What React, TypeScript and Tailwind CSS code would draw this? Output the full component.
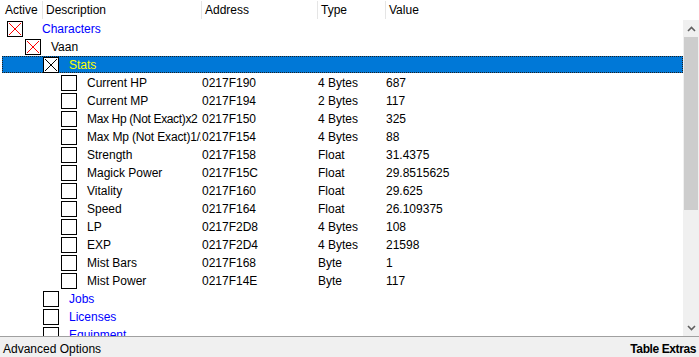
import React from 'react';

type Row = {
  level: number;
  label: string;
  address?: string;
  type?: string;
  value?: string;
  header?: boolean;
  mark?: 'red' | 'black' | 'none';
  selected?: boolean;
  tight?: string;
};

const ROWS: Row[] = [
  { level: 0, label: 'Characters', header: true, mark: 'red' },
  { level: 1, label: 'Vaan', mark: 'red' },
  { level: 2, label: 'Stats', mark: 'black', selected: true },
  { level: 3, label: 'Current HP', address: '0217F190', type: '4 Bytes', value: '687' },
  { level: 3, label: 'Current MP', address: '0217F194', type: '2 Bytes', value: '117' },
  { level: 3, label: 'Max Hp (Not Exact)x2', address: '0217F150', type: '4 Bytes', value: '325', tight: 'tracking-[-0.35px]' },
  { level: 3, label: 'Max Mp (Not Exact)1/2', address: '0217F154', type: '4 Bytes', value: '88', tight: 'tracking-[-0.15px]' },
  { level: 3, label: 'Strength', address: '0217F158', type: 'Float', value: '31.4375' },
  { level: 3, label: 'Magick Power', address: '0217F15C', type: 'Float', value: '29.8515625' },
  { level: 3, label: 'Vitality', address: '0217F160', type: 'Float', value: '29.625' },
  { level: 3, label: 'Speed', address: '0217F164', type: 'Float', value: '26.109375' },
  { level: 3, label: 'LP', address: '0217F2D8', type: '4 Bytes', value: '108' },
  { level: 3, label: 'EXP', address: '0217F2D4', type: '4 Bytes', value: '21598' },
  { level: 3, label: 'Mist Bars', address: '0217F168', type: 'Byte', value: '1' },
  { level: 3, label: 'Mist Power', address: '0217F14E', type: 'Byte', value: '117' },
  { level: 2, label: 'Jobs', header: true },
  { level: 2, label: 'Licenses', header: true },
  { level: 2, label: 'Equipment', header: true },
];

function CheckBox({ mark = 'none' }: { mark?: Row['mark'] }) {
  return (
    <div className="w-[16px] h-[16px] border border-black bg-white shrink-0 relative">
      {mark !== 'none' && (
        <svg width="14" height="14" viewBox="0 0 14 14" className="absolute left-0 top-0">
          <path
            d="M1 1 L13 13 M13 1 L1 13"
            stroke={mark === 'red' ? '#ff0000' : '#000000'}
            strokeWidth="1"
            fill="none"
          />
        </svg>
      )}
    </div>
  );
}

function TreeRow({ row }: { row: Row }) {
  const boxLeft = 7 + row.level * 18;
  const gap = row.level === 0 ? 19 : 10;
  const textColor = row.selected
    ? 'text-[#ffff00]'
    : row.header
    ? 'text-[#0000ff]'
    : 'text-black';

  return (
    <div className="relative h-[18px] flex items-center shrink-0 pt-[1px]">
      {row.selected && (
        <div className="absolute left-[2px] right-0 top-[1px] bottom-0 bg-[#0078d7] border border-dotted border-[#202020]" />
      )}
      <div className="relative flex items-center w-[201px] overflow-hidden whitespace-nowrap" style={{ paddingLeft: boxLeft }}>
        <CheckBox mark={row.mark} />
        <span className={`${textColor} ${row.tight ?? ''}`} style={{ marginLeft: gap }}>{row.label}</span>
      </div>
      <div className="relative w-[116px] pl-[1px] whitespace-nowrap">{row.address}</div>
      <div className="relative w-[68px] pl-[1px] whitespace-nowrap">{row.type}</div>
      <div className="relative pl-[1px] whitespace-nowrap">{row.value}</div>
    </div>
  );
}

function Chevron({ up }: { up?: boolean }) {
  return (
    <svg width="9" height="6" viewBox="0 0 9 6">
      <path
        d={up ? 'M1 5 L4.5 1.5 L8 5' : 'M1 1 L4.5 4.5 L8 1'}
        stroke="#606060"
        strokeWidth="1.6"
        fill="none"
      />
    </svg>
  );
}

export default function App() {
  const cols = [
    { name: 'Active', w: 'w-[42px]', first: true },
    { name: 'Description', w: 'w-[159px]' },
    { name: 'Address', w: 'w-[116px]' },
    { name: 'Type', w: 'w-[68px]' },
    { name: 'Value', w: 'flex-1' },
  ];

  return (
    <div className="w-[699px] h-[357px] flex flex-col bg-white text-[12px] text-black overflow-hidden" style={{ fontFamily: '"Liberation Sans", Arial, sans-serif' }}>
      <div className="h-[19px] flex shrink-0 bg-white pt-[1px]">
        {cols.map((c) => (
          <div key={c.name} className={`${c.w} h-full flex items-center ${c.first ? 'pl-[5px]' : 'pl-[3px] border-l border-[#e5e5e5]'}`}>
            {c.name}
          </div>
        ))}
      </div>

      <div className="flex-1 flex min-h-0">
        <div className="flex-1 flex flex-col overflow-hidden">
          {ROWS.map((r) => (
            <TreeRow key={r.label} row={r} />
          ))}
        </div>
        <div className="w-[16px] flex flex-col bg-[#f0f0f0] mt-[1px]">
          <div className="h-[17px] flex items-center justify-center">
            <Chevron up />
          </div>
          <div className="h-[173px] mx-[1px] bg-[#cdcdcd]" />
          <div className="flex-1" />
          <div className="h-[16px] flex items-center justify-center">
            <Chevron />
          </div>
        </div>
      </div>

      <div className="h-[21px] shrink-0 border-t border-[#a0a0a0] bg-[#f0f0f0] flex items-center justify-between px-[3px] pt-[3px]">
        <span>Advanced Options</span>
        <span className="font-bold tracking-[-0.4px]">Table Extras</span>
      </div>
    </div>
  );
}
